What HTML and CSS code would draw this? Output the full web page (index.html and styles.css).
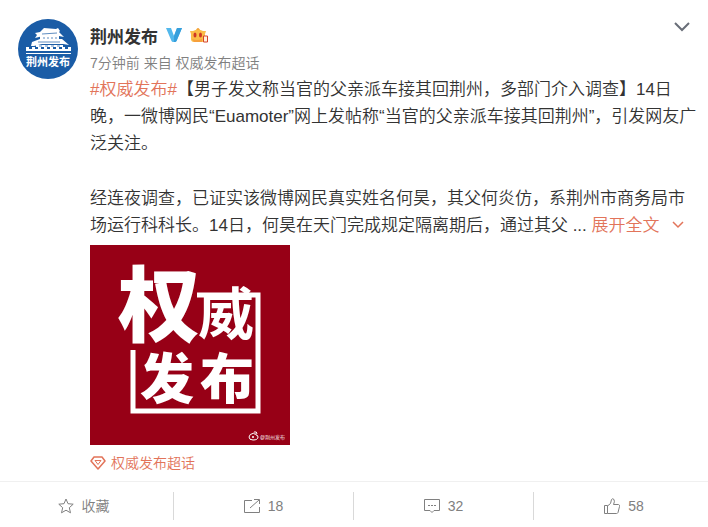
FILE: index.html
```html
<!DOCTYPE html>
<html lang="zh-CN">
<head>
<meta charset="utf-8">
<meta name="viewport" content="width=device-width, initial-scale=1">
<title>荆州发布</title>
<link rel="stylesheet" href="styles.css">
</head>
<body>
<article class="post">
  <div class="post-main">
    <a class="avatar" href="#" aria-label="荆州发布">
      <svg viewBox="0 0 60 60" width="60" height="60">
        <circle cx="30" cy="30" r="30" fill="#1a5ca6"/>
        <g fill="#fff">
          <path d="M17 14l5-1 4-4 12 1 2-1 2 3-1 1 5 5-5-1H25l-8 2 2-3z"/>
          <path d="M22 17h19v4H22z"/>
          <path d="M14 23l8-3h20l2 0 7 6-6-1H24l-8 2-3 0z"/>
          <path d="M18 26h27v2H18z"/>
          <path d="M8 30v-2h3v2h3v-2h3v2h3v-2h3v2h3v-2h3v2h3v-2h3v2h3v-2h3v2h3v-2h3v2h3v-2h3v4H8z"/>
          <path d="M8 34h45v1H8z"/>
        </g>
        <path d="M24 15l15-1M25 19h2M29 19h2M33 19h2M37 19h2M20 23h22M21 27h3M27 27h3M33 27h3M39 27h3" stroke="#1a5ca6" stroke-width=".7" fill="none"/>
        <text class="avatar-text" x="30" y="47" text-anchor="middle">荆州发布</text>
      </svg>
    </a>
    <div class="post-body">
      <header class="post-head">
        <div class="name-row">
          <a class="name" href="#">荆州发布</a>
          <svg class="verified" viewBox="0 0 16 14" width="16" height="14" aria-hidden="true">
            <path d="M0 0h5l3 8 3-8h5l-5.500 13q-.5 1-1.500 1h-2q-1 0-1.500-1z" fill="#53b8ec"/>
            <path d="M11 0h5l-5.500 13q-.5 1-1.500 1H8V8z" fill="#369fdc"/>
          </svg>
          <svg class="medal" viewBox="0 0 19 16" width="19" height="16" aria-hidden="true">
            <path d="M6 3q2-4 4 0z" fill="#f39a2c"/>
            <path d="M0 4l3 0q5-3 10 0l3 0-1 3v5q0 3-3 3H4q-3 0-3-3V7z" fill="#fbbd48"/>
            <path d="M2 12q5 2 10 0v3H4z" fill="#f6a03c"/>
            <ellipse cx="5" cy="8" rx="1.500" ry="2.500" fill="#cf3824"/>
            <ellipse cx="10.500" cy="8" rx="1.500" ry="2.500" fill="#cf3824"/>
            <path d="M13.500 9h4v6h-4z" fill="#fff3dc" stroke="#d6432d"/>
          </svg>
          <button class="more" type="button" aria-label="更多">
            <svg viewBox="0 0 16 10" width="16" height="10"><path d="M1 1l7 7 7-7" fill="none" stroke="#696e78" stroke-width="2"/></svg>
          </button>
        </div>
        <div class="meta"><a href="#">7分钟前</a> 来自 <a href="#">权威发布超话</a></div>
      </header>
      <div class="text">
        <p><a class="accent" href="#">#权威发布#</a>【男子发文称当官的父亲派车接其回荆州，多部门介入调查】14日<br>晚，一微博网民“Euamoter”网上发帖称“当官的父亲派车接其回荆州”，引发网友广<br>泛关注。</p>
        <p>经连夜调查，已证实该微博网民真实姓名何昊，其父何炎仿，系荆州市商务局市<br>场运行科科长。14日，何昊在天门完成规定隔离期后，通过其父 ... <a class="accent" href="#">展开全文<svg class="expand" viewBox="0 0 12 8" width="12" height="8" aria-hidden="true"><path d="M1 1l5 5 5-5" fill="none" stroke="currentColor" stroke-width="1.500"/></svg></a></p>
      </div>
      <a class="picture" href="#" aria-label="权威发布">
        <svg viewBox="0 0 200 200" width="200" height="200">
          <rect width="200" height="200" fill="#970016"/>
          <path d="M107 50H168V166H43V105" fill="none" stroke="#fff" stroke-width="5"/>
          <g class="poster-text">
            <text x="28" y="90" font-size="82">权</text>
            <text class="poster-fine" x="108" y="89" font-size="56">威</text>
            <text x="50" y="154" font-size="54">发</text>
            <text x="110" y="154" font-size="54">布</text>
          </g>
          <g fill="none" stroke="#fff">
            <path d="M164 188q-5 1-5 4 0 3 4 3 5 0 5-3 0-2-2-2 0-2-2-1"/>
            <path d="M164 187q3-1 3 2"/>
          </g>
          <circle cx="163" cy="192" r="1" fill="#fff"/>
          <text class="watermark" x="170" y="194">@荆州发布</text>
        </svg>
      </a>
      <a class="topic accent" href="#">
        <svg viewBox="0 0 16 14" width="16" height="14" aria-hidden="true">
          <path d="M4 1h8l3 4-7 8-7-8z" fill="none" stroke="currentColor" stroke-width="1.500" stroke-linejoin="round"/>
          <path d="M5 4.500h6l-3 4z" fill="none" stroke="currentColor" stroke-linejoin="round"/>
        </svg>
        <span>权威发布超话</span>
      </a>
    </div>
  </div>
  <footer class="actions">
    <button type="button">
      <svg viewBox="0 0 16 16" width="16" height="16" aria-hidden="true"><path d="M8 1l2 4.700 5.200.5-3.900 3.500 1.200 5.100L8 12.200l-4.500 2.600 1.200-5.100L.8 6.200 6 5.700z"/></svg>
      <span>收藏</span>
    </button>
    <button type="button">
      <svg viewBox="0 0 16 16" width="16" height="16" aria-hidden="true"><path d="M8 2.500H.5v12h15V9M6 10l9-8M10 1.500h5.500V6"/></svg>
      <span>18</span>
    </button>
    <button type="button">
      <svg viewBox="0 0 16 16" width="16" height="16" aria-hidden="true"><path d="M.5 1.500h15v11H10l-2 2-2-2H.5zM4 7.500h2M7 7.500h2M10 7.500h2"/></svg>
      <span>32</span>
    </button>
    <button type="button">
      <svg viewBox="0 0 16 16" width="16" height="16" aria-hidden="true"><path d="M.5 7.500h3v8h-3zM3.500 8l3-2.500 1-4q1-1.500 2.500 0 1 2-.5 5h5q1.500.5 1 2l-1.500 6q-.5 1-1.500 1h-9"/></svg>
      <span>58</span>
    </button>
  </footer>
</article>
</body>
</html>
```
FILE: styles.css
```css
* {
  box-sizing: border-box;
}

body {
  margin: 0;
  overflow-x: hidden;
  background: #fff;
  color: #333;
  font-family: "Liberation Sans", "Noto Sans CJK SC", sans-serif;
  font-size: 14px;
  font-weight: 350;
}

a {
  color: inherit;
  text-decoration: none;
}

button {
  padding: 0;
  border: 0;
  background: none;
  color: inherit;
  font: inherit;
  cursor: pointer;
}

svg {
  display: block;
}

.post-main {
  display: flex;
  gap: 12px;
  padding: 18px 18px 6px;
}

.avatar {
  flex: none;
  padding-top: 1px;
}

.avatar-text {
  fill: #fff;
  font-family: "Noto Sans CJK SC", sans-serif;
  font-size: 11px;
  font-weight: 700;
}

.post-body {
  flex: 1;
  min-width: 0;
}

.name-row {
  display: flex;
  align-items: center;
  gap: 8px;
  height: 34px;
}

.name {
  font-size: 17px;
  font-weight: 700;
}

.more {
  align-self: flex-start;
  margin-left: auto;
  padding: 4px 0;
}

.meta {
  color: #808080;
  line-height: 22px;
}

.text {
  margin-top: 2px;
  font-size: 17px;
  line-height: 27px;
  white-space: nowrap;
}

.text p {
  margin: 0 0 28px;
}

.text p:last-child {
  margin-bottom: 6px;
}

.accent {
  color: #e2745a;
}

.expand {
  display: inline-block;
  margin-left: 12px;
  vertical-align: 2px;
}

.picture {
  display: block;
  width: 200px;
}

.poster-text {
  fill: #fff;
  font-family: "Noto Sans CJK SC", sans-serif;
  font-weight: 900;
}

.poster-fine {
  font-weight: 700;
}

.watermark {
  fill: #fff;
  font-size: 5px;
}

.topic {
  display: flex;
  align-items: center;
  gap: 5px;
  width: fit-content;
  margin-top: 6px;
  line-height: 24px;
}

.actions {
  display: grid;
  grid-template-columns: repeat(4, 1fr);
  margin: 0 -6px;
  padding: 10px 0;
  border-top: 1px solid #f0f0f0;
  color: #808080;
}

.actions button {
  display: flex;
  align-items: center;
  justify-content: center;
  gap: 8px;
  height: 28px;
  border-right: 1px solid #d9d9d9;
  line-height: 20px;
}

.actions button:last-child {
  border-right: 0;
}

.actions path {
  fill: none;
  stroke: currentColor;
}
```
